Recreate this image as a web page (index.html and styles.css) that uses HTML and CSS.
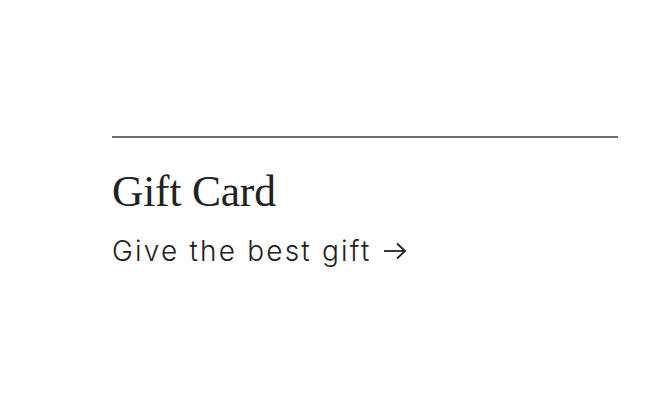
FILE: index.html
```html
<!DOCTYPE html>
<html lang="en">
<head>
  <meta charset="UTF-8">
  <title>Gift Card</title>
  <link rel="stylesheet" href="styles.css">
</head>
<body>

  <section class="promo">
    <hr class="promo-rule">
    <h2 class="promo-title">Gift Card</h2>
    <a class="promo-link" href="#">
      Give the best gift
      <svg class="arrow" width="24" height="18" viewBox="0 0 24 18" fill="none" stroke="#222" stroke-width="1.8">
        <path d="M1 9H22"/>
        <path d="M14 1.5L22 9L14 16.5"/>
      </svg>
    </a>
  </section>

</body>
</html>
```

FILE: styles.css
```css
body {
  margin: 0;
  background: #fff;
  color: #222;
}

.promo {
  margin: 0 54px 0 112px;
  padding-top: 136px;
}

.promo-rule {
  border: 0;
  border-top: 2px solid #6b6b6b;
  margin: 0;
}

.promo-title {
  font-family: "Liberation Serif", serif;
  font-weight: normal;
  font-size: 43.5px;
  line-height: 1;
  margin: 32px 0 0;
  letter-spacing: -0.2px;
}

.promo-link {
  display: inline-flex;
  align-items: center;
  gap: 11px;
  margin-top: 20px;
  font-family: Inter, sans-serif;
  font-weight: 300;
  font-size: 28px;
  letter-spacing: 2.2px;
  color: #222;
  text-decoration: none;
}
```
